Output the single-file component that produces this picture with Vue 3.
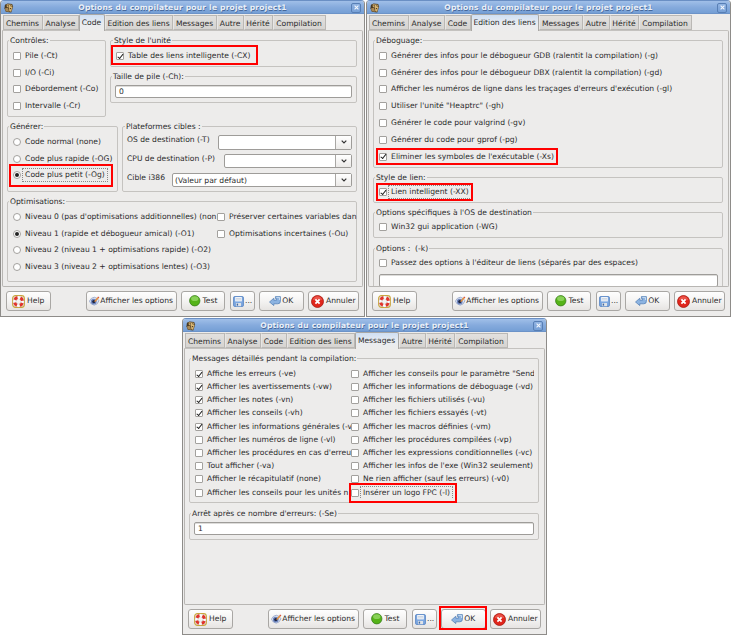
<script setup>
const tabs = ['Chemins', 'Analyse', 'Code', 'Edition des liens', 'Messages', 'Autre', 'Hérité', 'Compilation']

const windows = [
  { id: 'code', active: 2 },
  { id: 'link', active: 3 },
  { id: 'msg', active: 4 },
]

const checks = ['Pile (-Ct)', 'I/O (-Ci)', 'Débordement (-Co)', 'Intervalle (-Cr)']
const generate = ['Code normal (none)', 'Code plus rapide (-OG)', 'Code plus petit (-Og)']
const platforms = [
  { label: 'OS de destination (-T)', value: '', size: 'os' },
  { label: 'CPU de destination (-P)', value: '', size: 'cpu' },
  { label: 'Cible i386', value: '(Valeur par défaut)', size: 'target' },
]
const levels = [
  "Niveau 0 (pas d'optimisations additionnelles) (non",
  'Niveau 1 (rapide et débogueur amical) (-O1)',
  'Niveau 2 (niveau 1 + optimisations rapide) (-O2)',
  'Niveau 3 (niveau 2 + optimisations lentes) (-O3)',
]
const extras = ['Préserver certaines variables dan', 'Optimisations incertaines (-Ou)']
const debug = [
  'Générer des infos pour le débogueur GDB (ralentit la compilation) (-g)',
  'Générer des infos pour le débogueur DBX (ralentit la compilation) (-gd)',
  "Afficher les numéros de ligne dans les traçages d'erreurs d'exécution (-gl)",
  'Utiliser l\'unité "Heaptrc" (-gh)',
  'Générer le code pour valgrind (-gv)',
  'Générer du code pour gprof (-pg)',
  "Eliminer les symboles de l'exécutable (-Xs)",
]
const msgLeft = [
  'Affiche les erreurs (-ve)',
  'Afficher les avertissements (-vw)',
  'Afficher les notes (-vn)',
  'Afficher les conseils (-vh)',
  'Afficher les informations générales (-v',
  'Afficher les numéros de ligne (-vl)',
  "Afficher les procédures en cas d'erreu",
  'Tout afficher (-va)',
  'Afficher le récapitulatif (none)',
  'Afficher les conseils pour les unités n',
]
const msgRight = [
  'Afficher les conseils pour le paramètre "Send',
  'Afficher les informations de déboguage (-vd)',
  'Afficher les fichiers utilisés (-vu)',
  'Afficher les fichiers essayés (-vt)',
  'Afficher les macros définies (-vm)',
  'Afficher les procédures compilées (-vp)',
  'Afficher les expressions conditionnelles (-vc)',
  "Afficher les infos de l'exe (Win32 seulement)",
  'Ne rien afficher (sauf les erreurs) (-v0)',
  'Insérer un logo FPC (-l)',
]
</script>

<template>
  <div class="desktop">
    <section v-for="w in windows" :key="w.id" class="window" :class="'win-' + w.id">
      <header class="titlebar">
        <svg class="app-icon" viewBox="0 0 11 11">
          <path d="M1 2 L4 0.5 L9 1 L10 4 L8 10.5 L2 9.5 L0.5 6Z" fill="#4a3a22" />
          <path d="M3 1.5 L8.5 1.8 L9.3 5 L7.8 9.5 L5.8 9 L5.5 5 L3 4.2Z" fill="#d9b673" />
          <path d="M1 6 L4.5 5 L5.5 9.5 L2 9Z" fill="#a88855" />
          <path d="M4 3 L5.5 3.4 M7 3 L8.4 3.5 M6.5 6 L8 6.4" stroke="#32230e" stroke-width="1" />
        </svg>
        <h1>Options du compilateur pour le projet project1</h1>
        <span class="close"><svg viewBox="0 0 5 5"><path d="M0.6 0.6 L4.4 4.4 M4.4 0.6 L0.6 4.4" stroke="#f4f8fd" stroke-width="1.1" /></svg></span>
      </header>

      <nav class="tabs">
        <span v-for="(t, i) in tabs" :key="t" class="tab" :class="{ active: i === w.active }">{{ t }}</span>
      </nav>

      <main class="page">
        <template v-if="w.id === 'code'">
          <div class="row-top">
            <div class="group g-checks">
              <h2>Contrôles:</h2>
              <label v-for="c in checks" :key="c" class="opt"><i class="box"></i><span>{{ c }}</span></label>
            </div>
            <div class="stack">
              <div class="group g-style">
                <h2>Style de l'unité</h2>
                <label class="opt"><i class="box on"></i><span>Table des liens intelligente (-CX)</span></label>
              </div>
              <div class="group g-stack">
                <h2>Taille de pile (-Ch):</h2>
                <div class="field">0</div>
              </div>
            </div>
          </div>
          <div class="row-mid">
            <div class="group g-gen">
              <h2>Générer:</h2>
              <label v-for="(g, i) in generate" :key="g" class="opt"><i class="radio" :class="{ on: i === 2 }"></i><span :class="{ focus: i === 2 }">{{ g }}</span></label>
            </div>
            <div class="group g-plat">
              <h2>Plateformes cibles :</h2>
              <div v-for="p in platforms" :key="p.label" class="plat">
                <span class="plat-label">{{ p.label }}</span>
                <span class="combo" :class="p.size">
                  <span class="combo-value">{{ p.value }}</span>
                  <span class="combo-arrow"><svg viewBox="0 0 6 4"><path d="M0.7 0.7 L3 3 L5.3 0.7" fill="none" stroke="#333" stroke-width="1.2" /></svg></span>
                </span>
              </div>
            </div>
          </div>
          <div class="group g-opt">
            <h2>Optimisations:</h2>
            <div class="two">
              <div class="col">
                <label v-for="(l, i) in levels" :key="l" class="opt"><i class="radio" :class="{ on: i === 1 }"></i><span>{{ l }}</span></label>
              </div>
              <div class="col">
                <label v-for="e in extras" :key="e" class="opt"><i class="box"></i><span>{{ e }}</span></label>
              </div>
            </div>
          </div>
        </template>

        <template v-else-if="w.id === 'link'">
          <div class="group g-debug">
            <h2>Déboguage:</h2>
            <label v-for="(d, i) in debug" :key="d" class="opt"><i class="box" :class="{ on: i === 6 }"></i><span>{{ d }}</span></label>
          </div>
          <div class="group g-single">
            <h2>Style de lien:</h2>
            <label class="opt"><i class="box on"></i><span class="focus">Lien intelligent (-XX)</span></label>
          </div>
          <div class="group g-single">
            <h2>Options spécifiques à l'OS de destination</h2>
            <label class="opt"><i class="box"></i><span>Win32 gui application (-WG)</span></label>
          </div>
          <div class="group g-pass">
            <h2>Options :&nbsp; (-k)</h2>
            <label class="opt"><i class="box"></i><span>Passez des options à l'éditeur de liens (séparés par des espaces)</span></label>
            <div class="field"></div>
          </div>
        </template>

        <template v-else>
          <div class="group g-msg">
            <h2>Messages détaillés pendant la compilation:</h2>
            <div class="two">
              <div class="col">
                <label v-for="(m, i) in msgLeft" :key="m" class="opt"><i class="box" :class="{ on: i < 5 }"></i><span>{{ m }}</span></label>
              </div>
              <div class="col">
                <label v-for="(m, i) in msgRight" :key="m" class="opt"><i class="box"></i><span :class="{ focus: i === 9 }">{{ m }}</span></label>
              </div>
            </div>
          </div>
          <div class="group g-stop">
            <h2>Arrêt après ce nombre d'erreurs: (-Se)</h2>
            <div class="field">1</div>
          </div>
        </template>
      </main>

      <footer class="buttons">
        <button class="b-help">
          <svg viewBox="0 0 14 14">
            <rect x="0.7" y="0.7" width="12.6" height="12.6" rx="3" fill="none" stroke="#c9a53c" stroke-width="1.2" />
            <circle cx="7" cy="7" r="4.4" fill="none" stroke="#b9b9b4" stroke-width="3.6" />
            <circle cx="7" cy="7" r="4.4" fill="none" stroke="#fafafa" stroke-width="2.9" />
            <circle cx="7" cy="7" r="4.4" fill="none" stroke="#e0342b" stroke-width="3.2" stroke-dasharray="3.7 3.21" stroke-dashoffset="-1.6" />
          </svg>
          <span>Help</span>
        </button>
        <button class="b-show">
          <svg viewBox="0 0 11 11">
            <path d="M0.4 5.5 Q2 1.6 5.5 1.3 Q9 1.8 10.4 5 Q9 9.2 5.5 9.6 Q1.8 9.2 0.4 5.5Z" fill="#dfe6f3" stroke="#8c9cc2" stroke-width="0.8" />
            <circle cx="5" cy="5.8" r="3" fill="#6c84bd" />
            <circle cx="5" cy="5.8" r="1.7" fill="#1e2745" />
            <path d="M5.4 5.4 L8.8 1.2 L10.2 2.3 L6.6 6.4Z" fill="#e8913a" />
            <path d="M8.8 1.2 L9.6 0.4 L10.9 1.5 L10.2 2.3Z" fill="#d44a3a" />
          </svg>
          <span>Afficher les options</span>
        </button>
        <button class="b-test">
          <svg viewBox="0 0 12 12">
            <circle cx="6" cy="6" r="5.4" fill="#55b318" stroke="#35791a" stroke-width="0.8" />
            <ellipse cx="6" cy="3.8" rx="3.8" ry="2.4" fill="#9adb6c" opacity="0.75" />
          </svg>
          <span>Test</span>
        </button>
        <button class="b-save">
          <svg viewBox="0 0 11 11">
            <rect x="0.6" y="0.6" width="9.8" height="9.8" rx="1" fill="#7ea8e0" stroke="#4a7bbf" stroke-width="0.8" />
            <rect x="2.2" y="1" width="6.6" height="4.4" fill="#f6f8fb" />
            <path d="M3 2.4 H8 M3 3.9 H8" stroke="#a9b8cc" stroke-width="0.6" />
            <rect x="3" y="7" width="5" height="3.2" fill="#dfe3e8" />
            <rect x="3.7" y="7.6" width="1.4" height="2" fill="#3f66a0" />
          </svg>
          <span>...</span>
        </button>
        <button class="b-ok">
          <svg viewBox="0 0 12 10">
            <path d="M0.5 6 L4.8 2.2 V4.1 H7.6 V2.6 H6.4 V0.6 H11.4 V5.2 Q11.4 7.8 8.8 7.8 H4.8 V9.6Z" fill="#8cb3e1" stroke="#4c7ab2" stroke-width="0.7" />
            <path d="M7.4 1.4 H10.5 V4" fill="none" stroke="#d8e6f6" stroke-width="0.8" />
          </svg>
          <span>OK</span>
        </button>
        <button class="b-cancel">
          <svg viewBox="0 0 13 13">
            <circle cx="6.5" cy="6.5" r="6" fill="#e0251b" stroke="#a81a12" stroke-width="0.8" />
            <path d="M1.6 5.2 Q3 1.4 6.5 1.3 Q10 1.4 11.4 5.2 Q6.5 3.8 1.6 5.2Z" fill="#f0665c" opacity="0.7" />
            <path d="M4.4 4.4 L8.6 8.6 M8.6 4.4 L4.4 8.6" stroke="#fff" stroke-width="1.8" />
          </svg>
          <span>Annuler</span>
        </button>
      </footer>
    </section>

    <i class="mark m-table"></i>
    <i class="mark m-small"></i>
    <i class="mark m-strip"></i>
    <i class="mark m-smart"></i>
    <i class="mark m-logo"></i>
    <i class="mark m-ok"></i>
  </div>
</template>

<style>
body { background: #fff; }
</style>

<style scoped>
.desktop {
  position: relative;
  width: 731px;
  height: 636px;
  overflow: hidden;
  font: 7.6px/10px "DejaVu Sans", sans-serif;
  color: #2b2b2b;
  text-rendering: geometricPrecision;
}
.desktop * { box-sizing: border-box; }
h1, h2 { margin: 0; font-size: inherit; font-weight: normal; white-space: nowrap; }

.window {
  position: absolute;
  width: 365px;
  height: 317px;
  display: flex;
  flex-direction: column;
  background: #edeceb;
  border: 1px solid #8e8c89;
  border-top-color: #6a8fc4;
  border-radius: 4px 4px 0 0;
  overflow: hidden;
}
.win-code { left: 0; top: 0; }
.win-link { left: 366px; top: 0; }
.win-msg { left: 182px; top: 318px; }

.titlebar {
  display: flex;
  align-items: center;
  height: 13px;
  flex: none;
  padding: 1px 3px 0;
  background: linear-gradient(#a0bfe8, #86abdd 50%, #759fd5);
  border-bottom: 1px solid #6c93c8;
}
.app-icon { width: 10px; height: 10px; flex: none; }
h1 {
  flex: 1;
  text-align: center;
  font-size: 7.6px;
  font-weight: bold;
  letter-spacing: 0.18px;
  line-height: 11px;
  color: #e9eff7;
  text-shadow: 0.5px 0.5px 0.5px #46689a;
}
.close {
  display: grid;
  place-items: center;
  width: 10px;
  height: 10px;
  border: 1px solid #587fb5;
  border-radius: 2px;
}
.close svg { width: 5px; height: 5px; }

.tabs {
  display: grid;
  grid-template-columns: 40px 36px 26px 68px 44px 27px 29px 53px;
  align-items: end;
  flex: none;
  height: 16px;
  padding-left: 2px;
  position: relative;
  z-index: 1;
}
.tab {
  height: 15px;
  padding-right: 1px;
  line-height: 16px;
  text-align: center;
  white-space: nowrap;
  background: linear-gradient(#e2e0de, #d6d4d1);
  border: 1px solid #bab8b5;
  border-left-color: #e8e6e4;
}
.tab:first-child { border-left-color: #bab8b5; }
.tab.active {
  height: 17px;
  margin-bottom: -1px;
  background: linear-gradient(#cfdff3, #e8ecf1 50%, #edeceb);
  border-color: #aaa8a5;
  border-bottom: 0;
  border-radius: 2px 2px 0 0;
}

.page {
  width: 361px;
  height: 257px;
  flex: none;
  margin-left: 1px;
  padding: 9px 5px 0 4px;
  border: 1px solid #b8b6b3;
  border-top-color: #c4c2bf;
  border-radius: 0 2px 2px 2px;
  overflow: hidden;
}

.group {
  border: 1px solid #c5c3c0;
  border-radius: 2px;
  padding: 0 5px 0 6px;
  min-width: 0;
}
h2 {
  width: fit-content;
  height: 10px;
  margin: -5px 0 4.7px -5px;
  padding: 0 1px;
  line-height: 10.6px;
  background: #edeceb;
}
.opt {
  display: flex;
  align-items: center;
  height: 16.8px;
  white-space: nowrap;
}
h2 + .opt, h2 + .two { margin-top: -3.2px; }
.opt span { padding: 0 1px; }
.focus { outline: 1px dotted #888; outline-offset: 1px; }
.box, .radio {
  position: relative;
  flex: none;
  width: 8px;
  height: 8px;
  margin: 0 2.7px 0 -0.6px;
  background: #fff;
  border: 1px solid #a3a19e;
  border-radius: 1px;
}
.radio { border-radius: 50%; }
.box.on::after {
  content: "";
  position: absolute;
  left: 1.7px;
  top: -0.4px;
  width: 2.4px;
  height: 4.6px;
  border: solid #222;
  border-width: 0 1.3px 1.3px 0;
  transform: rotate(38deg);
}
.radio.on::after {
  content: "";
  position: absolute;
  inset: 1px;
  border-radius: 50%;
  background: #222;
}
.field {
  height: 13px;
  padding-left: 3px;
  line-height: 11px;
  background: #fff;
  border: 1px solid #9e9c99;
  border-radius: 2px;
  box-shadow: inset 0 1px 0 #dddcda;
}

.row-top { display: grid; grid-template-columns: 99px 247px; column-gap: 4px; height: 77px; }
.stack { display: flex; flex-direction: column; gap: 9px; }
.g-style { height: 27px; }
.g-style h2 { margin-left: -4px; }
.g-stack { height: 27px; padding: 0 4px; }
.g-stack h2 { margin-left: -3px; margin-bottom: 3px; }
.row-mid { display: grid; grid-template-columns: 111px 235px; column-gap: 4px; height: 66px; margin-top: 9px; }
.g-plat { padding: 0 4px; }
.g-plat h2 { margin-left: -2px; margin-bottom: 3px; }
.plat { display: flex; justify-content: space-between; height: 18.8px; }
.plat-label { line-height: 10.8px; }
.combo {
  display: flex;
  height: 14.5px;
  background: #fff;
  border: 1px solid #9e9c99;
  border-radius: 2px;
}
.combo.os { width: 134px; }
.combo.cpu { width: 128px; }
.combo.target { width: 180px; }
.combo-value { flex: 1; padding-left: 2px; line-height: 13px; }
.combo-arrow {
  display: grid;
  place-items: center;
  width: 16px;
  border-left: 1px solid #a9a7a4;
  background: linear-gradient(#fff, #eceae8);
}
.combo-arrow svg { width: 6px; height: 4px; }
.g-opt { height: 81px; margin-top: 9px; padding-right: 0; }
.two { display: grid; }
.two .col { overflow: hidden; padding-left: 1px; margin-left: -1px; }
.g-opt .two { grid-template-columns: 203px 139px; column-gap: 1px; }

.g-debug { height: 127.5px; }
.g-single { height: 25.5px; margin-top: 9.7px; }
.g-single h2 { margin-bottom: 3.8px; }
.g-pass { height: 60px; margin-top: 9.7px; padding: 0 4px 0 6px; }
.g-pass .field { margin: 2.2px 0 0 -1px; }

.g-msg { height: 145px; padding-right: 4px; }
.g-msg .two { grid-template-columns: 155px 182px; column-gap: 1px; }
.g-msg .opt { height: 13.2px; }
.g-msg h2 + .two { margin-top: -1.4px; }
.g-stop { height: 27px; margin-top: 10px; padding: 0 4px; }
.g-stop h2 { margin-left: -3px; margin-bottom: 3px; }

.buttons { display: flex; align-items: center; padding: 4px 0 0 5px; }
button {
  display: flex;
  align-items: center;
  height: 20px;
  padding: 0;
  font: inherit;
  color: inherit;
  white-space: nowrap;
  background: linear-gradient(#fefefe, #f4f3f2 50%, #e6e4e2);
  border: 1px solid #a9a7a4;
  border-radius: 3px;
}
.b-help { width: 45px; padding-left: 5px; gap: 2px; }
.b-help svg { width: 13px; height: 13px; }
.b-show { width: 91px; margin-left: 35px; padding-left: 2px; gap: 0.7px; }
.b-show svg { width: 10.5px; height: 10.5px; }
.b-test { width: 44px; margin-left: 4px; padding-left: 7px; gap: 2px; }
.b-test svg { width: 11.5px; height: 11.5px; }
.b-save { width: 25px; margin-left: 5px; padding-left: 2px; gap: 1px; }
.b-save svg { width: 11px; height: 11px; }
.b-ok { width: 45px; margin-left: 4px; padding-left: 9px; gap: 1.3px; }
.b-ok svg { width: 12px; height: 10px; }
.b-cancel { width: 51px; margin-left: 4px; padding-left: 2px; gap: 2px; }
.b-cancel svg { width: 13px; height: 13px; }

.mark { position: absolute; border: 2px solid #f00; box-sizing: border-box; }
.m-table { left: 111px; top: 45px; width: 147px; height: 20px; }
.m-small { left: 9px; top: 164px; width: 104px; height: 23px; }
.m-strip { left: 376px; top: 148px; width: 182px; height: 17px; }
.m-smart { left: 376px; top: 183px; width: 97px; height: 18px; }
.m-logo { left: 349px; top: 483px; width: 108px; height: 20px; }
.m-ok { left: 439px; top: 606px; width: 48px; height: 24px; }
</style>
